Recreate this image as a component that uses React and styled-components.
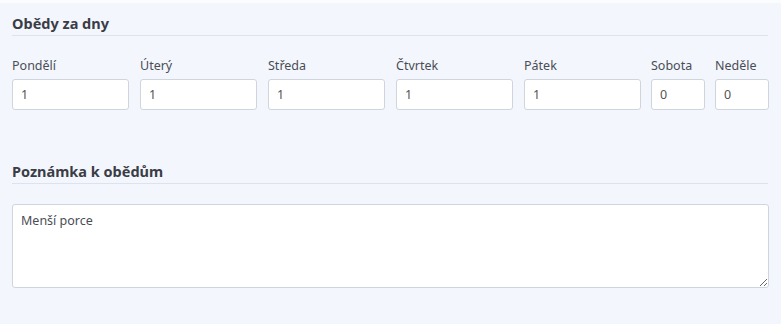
import React from "react"
import styled, { createGlobalStyle } from "styled-components"

const GlobalStyle = createGlobalStyle`
  body {
    margin: 0;
    background: #fbfcfe;
    font-family: "Noto Sans", "Open Sans", sans-serif;
  }
`

const Panel = styled.div`
  margin-top: 3px;
  background: #f3f7fd;
  padding: 10px 12px 36px;
  min-height: 275px;
`

const Section = styled.section`
  & + & {
    margin-top: 51px;
  }
`

const Title = styled.h3`
  margin: 0;
  font-size: 14.5px;
  line-height: 20px;
  font-weight: 700;
  color: #3b3d46;
  padding-bottom: 2px;
  border-bottom: 1px solid #dde3ec;
  width: 756px;
`

const Days = styled.div`
  display: grid;
  grid-template-columns: repeat(5, 117px) 53px 53px;
  column-gap: 11px;
  margin-top: 21px;
  & > div:nth-child(6),
  & > div:nth-child(7) {
    margin-left: -1px;
  }
`

const Field = styled.div`
  display: flex;
  flex-direction: column;
`

const Label = styled.label`
  font-size: 12.5px;
  line-height: 18px;
  color: #4a4d55;
  margin-bottom: 4px;
`

const Input = styled.input`
  box-sizing: border-box;
  width: 100%;
  height: 31px;
  padding: 0 8px;
  border: 1px solid #cfd5dd;
  border-radius: 3px;
  background: #fff;
  font-family: inherit;
  font-size: 12.5px;
  color: #555;
  outline: none;
`

const Note = styled.textarea`
  display: block;
  box-sizing: border-box;
  margin-top: 20px;
  width: 757px;
  height: 84px;
  padding: 7px 8px;
  border: 1px solid #cfd5dd;
  border-radius: 3px;
  background: #fff;
  font-family: inherit;
  font-size: 12.5px;
  line-height: 18px;
  color: #4a4d55;
  outline: none;
  resize: both;
`

const days = [
  ["Pondělí", "1"],
  ["Úterý", "1"],
  ["Středa", "1"],
  ["Čtvrtek", "1"],
  ["Pátek", "1"],
  ["Sobota", "0"],
  ["Neděle", "0"],
]

export default function App() {
  return (
    <>
      <GlobalStyle />
      <Panel>
        <Section>
          <Title>Obědy za dny</Title>
          <Days>
            {days.map(([name, value]) => (
              <Field key={name}>
                <Label>{name}</Label>
                <Input defaultValue={value} />
              </Field>
            ))}
          </Days>
        </Section>
        <Section>
          <Title>Poznámka k obědům</Title>
          <Note defaultValue="Menší porce" />
        </Section>
      </Panel>
    </>
  )
}
